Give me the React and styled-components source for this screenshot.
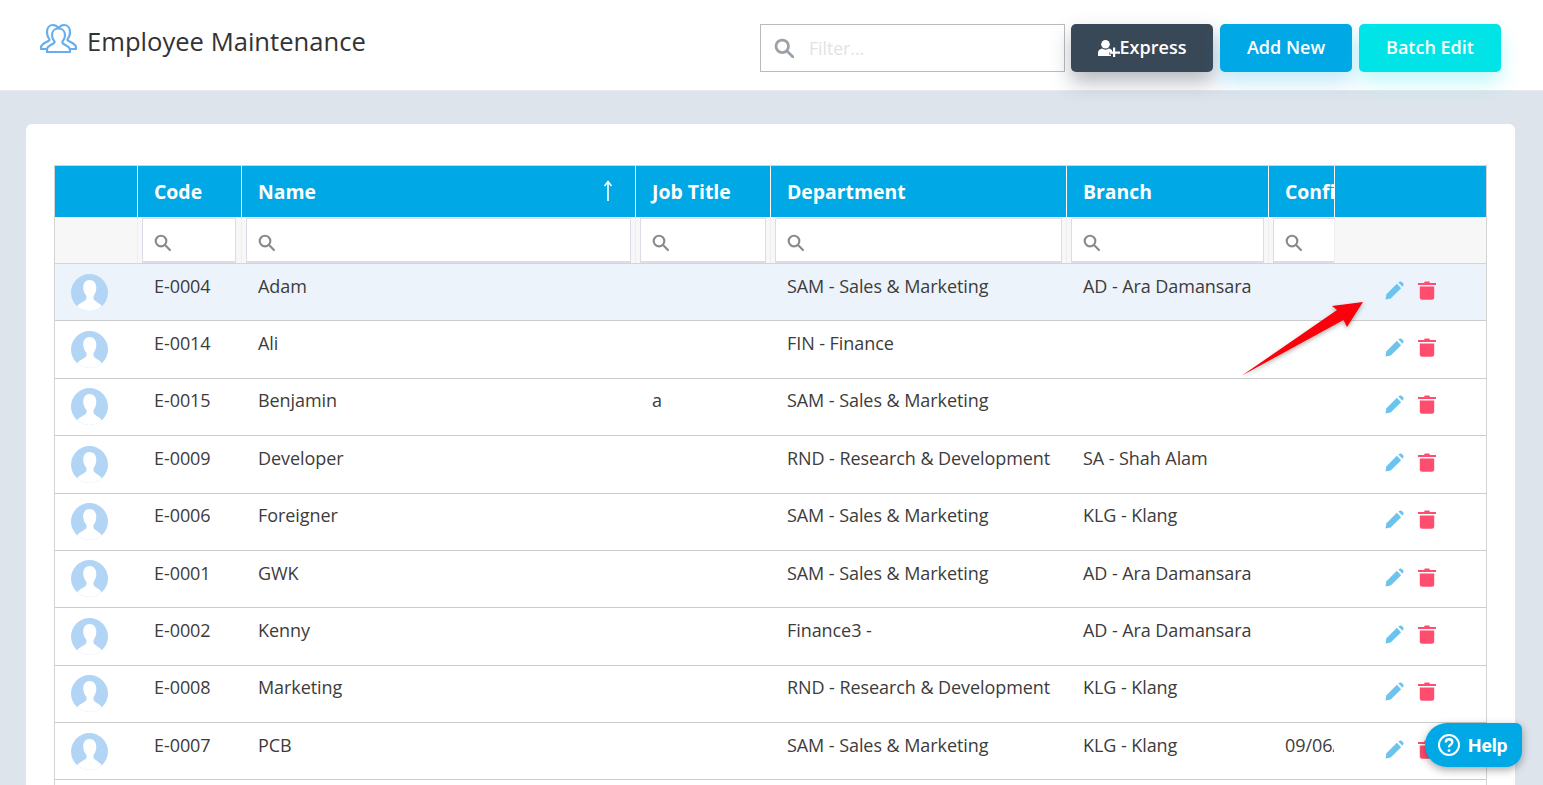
import React from "react";
import styled, { createGlobalStyle } from "styled-components";

const COLS = "82px 104px 394px 135px 296px 202px 66px 152px";

const Global = createGlobalStyle`
  html, body { margin: 0; padding: 0; height: 100%; overflow: hidden; background: #dde4ec; }
  body { font-family: "Open Sans", "Liberation Sans", sans-serif; color: #333; }
  * { box-sizing: border-box; }
`;

const Page = styled.div`
  position: relative;
  height: 785px;
  overflow: hidden;
  background: #dde4ec;
`;
const TopBar = styled.header`
  height: 91px;
  background: #fff;
  border-bottom: 1px solid #e6e9ed;
  display: flex;
  justify-content: space-between;
  padding: 0 42px 0 40px;
`;
const TitleWrap = styled.div`
  display: flex;
  align-items: flex-start;
  gap: 10px;
  padding-top: 23px;
`;
const Title = styled.h1`
  margin: 3px 0 0;
  font-size: 25.6px;
  line-height: 32px;
  font-weight: 500;
  color: #333;
`;
const Actions = styled.div`
  display: flex;
  gap: 7px;
  padding-top: 24px;
`;
const FilterBox = styled.div`
  width: 305px;
  height: 48px;
  margin-right: -1px;
  border: 1px solid #bbb;
  background: #fff;
  display: flex;
  align-items: center;
  gap: 15px;
  padding-left: 13px;
  color: #9aa1a8;
`;
const FilterText = styled.span`
  font-size: 17.6px;
  color: #e2e2e2;
`;
const Button = styled.button`
  width: ${p => p.$w}px;
  height: 48px;
  border: 0;
  border-radius: 5px;
  background: ${p => p.$bg};
  box-shadow: 0 10px 20px ${p => p.$shadow};
  color: #fff;
  font-family: inherit;
  font-size: 18px;
  font-weight: 600;
  display: flex;
  align-items: center;
  justify-content: center;
  padding: 0 0 2px;
`;
const Card = styled.main`
  margin: 33px 28px 0 26px;
  height: 800px;
  background: #fff;
  border-radius: 6px;
  padding: 41px 28px 0 28px;
`;
const TableWrap = styled.div`
  border: 1px solid #d4d4d4;
  border-bottom: 0;
`;
const HeadRow = styled.div`
  display: grid;
  grid-template-columns: ${COLS};
  height: 51px;
  background: #00a8e6;
`;
const HeadCell = styled.div`
  position: relative;
  display: flex;
  align-items: center;
  justify-content: space-between;
  padding: 0 22px 0 16px;
  overflow: hidden;
  white-space: nowrap;
  color: #fff;
  font-size: 19.4px;
  font-weight: 700;
  border-left: ${p => (p.$first ? "0" : "1px solid #fff")};
`;
const SortMark = styled.span`
  display: flex;
  margin: -2px 0 0 0;
`;
const FilterRow = styled.div`
  display: grid;
  grid-template-columns: ${COLS};
  height: 47.1px;
  background: #f7f7f7;
  border-bottom: 1px solid #d4d4de;
`;
const FilterCell = styled.div`
  padding: 1px ${p => (p.$tight ? 5 : 4)}px 0 4px;
  border-left: ${p => (p.$first ? "0" : "1px solid #eee")};
  overflow: hidden;
`;
const FilterInput = styled.div`
  height: 45px;
  background: #fff;
  border: 1px solid #dcdce6;
  border-bottom-width: 2px;
  ${p => (p.$cut ? "border-right: 0; margin-right: -5px;" : "")}
  display: flex;
  align-items: center;
  padding: 4px 0 0 11px;
  color: #8a8a8a;
`;
const Row = styled.div`
  display: grid;
  grid-template-columns: ${COLS};
  height: 57.36px;
  background: ${p => (p.$active ? "#ecf3fb" : "#fff")};
  border-bottom: 1px solid #ccc;
`;
const AvatarCell = styled.div`
  padding: 9.55px 0 0 16px;
`;
const Cell = styled.div`
  padding: 9.65px 0 0 17px;
  font-size: 18px;
  line-height: 24px;
  letter-spacing: -0.07px;
  color: #3c3c3c;
  overflow: hidden;
  white-space: nowrap;
`;
const ActionCell = styled.div`
  display: flex;
  align-items: flex-start;
  gap: 14px;
  padding: 16.65px 0 0 51px;
`;
const TrashWrap = styled.span`
  display: flex;
  margin-top: -1px;
`;
const ArrowLayer = styled.svg`
  position: absolute;
  left: 1235px;
  top: 296px;
  pointer-events: none;
`;
const Help = styled.div`
  position: absolute;
  left: 1425px;
  top: 723px;
  width: 97px;
  height: 44px;
  background: #00a8e6;
  border-radius: 22px 6px 16px 22px;
  box-shadow: 0 3px 8px rgba(0, 0, 0, 0.35);
  color: #fff;
  font-family: "Roboto", "Liberation Sans", sans-serif;
  font-size: 19px;
  font-weight: 700;
  display: flex;
  align-items: center;
  gap: 7px;
  padding-left: 12px;
`;

const SearchIcon = ({ s = 17, w = 2 }) => (
  <svg width={s} height={s} viewBox="0 0 16 16" fill="none" stroke="currentColor" strokeWidth={w} strokeLinecap="round">
    <circle cx="6.6" cy="6.6" r="5" />
    <path d="M10.4 10.4 15 15" />
  </svg>
);
const TeamIcon = () => (
  <svg width="37" height="30" viewBox="0 0 37 30" fill="none" stroke="#68aeee" strokeWidth="2.2" strokeLinejoin="round" style={{ marginTop: 0 }}>
    <path d="M9.500 16C7.500 14 7 11.500 7 9c0-4 2.500-7 6-7 2.500 0 4.500 1.500 5.500 3.500C19.500 3.500 21.500 2 24 2c3.500 0 6 3 6 7 0 2.500-.5 5-2.500 7" />
    <path d="M9.500 16v1c-1 2-8.500 3-8.500 7.500V26h7M27.500 16v1c1 2 8.500 3 8.500 7.500V26h-7" />
    <path d="M18.500 5.500c4 0 6.500 3 6.500 6.500 0 3-1 5-2.500 6.500v1.500c1 2 7.500 3 7.500 7V29H7v-2.500c0-4 6.500-5 7.500-7V18.500C13 17 12 15 12 12c0-3.500 2.500-6.500 6.500-6.500Z" fill="#fff" />
  </svg>
);
const UserPlus = () => (
  <svg width="22" height="17" viewBox="0 0 22 17" fill="#fff" style={{ marginTop: 2 }}>
    <circle cx="7.500" cy="4.300" r="4.300" />
    <path d="M0 16v-3.500c0-2 1.500-3.300 4-4 2 1.500 5 1.500 7 0 1.500.4 2.500 1 3 2v1.500h-3v2.500h2V16Z" />
    <path d="M15 7.500h2.200v4H22v2.200h-4.800V17H15v-3.300h-3.500v-2.200H15Z" />
  </svg>
);
const Avatar = () => (
  <svg width="37" height="37" viewBox="0 0 37 37">
    <defs>
      <clipPath id="av"><circle cx="18.500" cy="18.500" r="18.500" /></clipPath>
    </defs>
    <g clipPath="url(#av)">
      <rect width="37" height="37" fill="#b2d5f6" />
      <path d="M18.500 6c4.200 0 6.800 3 6.800 7.500 0 3.500-1 6.500-2.800 8.500v2.500c0 2.300 6 4 9 8.500l1.500 4.500H4l1.500-4.500c3-4.500 10-6.200 10-8.500V22c-1.800-2-3.300-5-3.300-8.500 0-4.500 2.500-7.500 6.300-7.500Z" fill="#fff" />
    </g>
  </svg>
);
const Pencil = () => (
  <svg width="19" height="19" viewBox="0 0 20 20" fill="#6bc4ee">
    <path d="M0.500 19.500 1.500 14 12.500 3 17 7.500 6 18.500Z" />
    <path d="M14 1.500 16 0.500Q16.800 .2 17.500 .8L19.300 2.600Q19.900 3.300 19.500 4L18.400 6 Z" />
  </svg>
);
const Trash = () => (
  <svg width="18" height="20" viewBox="0 0 18 20" fill="#ff4d70">
    <path d="M0 3h6l.8-1.500h4.400L12 3h6v2H0Z" />
    <path d="M1.800 6.500h14.400v11q0 2.300-2.300 2.300H4.100q-2.300 0-2.300-2.300Z" />
  </svg>
);
const HelpGlyph = () => (
  <svg width="24" height="24" viewBox="0 0 24 24" fill="none" stroke="#fff" strokeWidth="2">
    <circle cx="12" cy="12" r="10" />
    <path d="M8.800 9.500c0-2 1.400-3.200 3.300-3.200s3.200 1.200 3.200 2.900c0 2.400-3.300 2.500-3.300 5" strokeWidth="2.400" />
    <circle cx="12" cy="17.600" r="1.400" fill="#fff" stroke="none" />
  </svg>
);

const COLUMNS = ["", "Code", "Name", "Job Title", "Department", "Branch", "Confirmation", ""];
const AD = "AD - Ara Damansara";
const KLG = "KLG - Klang";
const SAM = "SAM - Sales & Marketing";
const RND = "RND - Research & Development";
const ROWS = [
  ["E-0004", "Adam", "", SAM, AD, ""],
  ["E-0014", "Ali", "", "FIN - Finance", "", ""],
  ["E-0015", "Benjamin", "a", SAM, "", ""],
  ["E-0009", "Developer", "", RND, "SA - Shah Alam", ""],
  ["E-0006", "Foreigner", "", SAM, KLG, ""],
  ["E-0001", "GWK", "", SAM, AD, ""],
  ["E-0002", "Kenny", "", "Finance3 -", AD, ""],
  ["E-0008", "Marketing", "", RND, KLG, ""],
  ["E-0007", "PCB", "", SAM, KLG, "09/06/2020"],
  ["", "", "", "", "", ""],
];

export default function App() {
  return (
    <Page>
      <Global />
      <TopBar>
        <TitleWrap>
          <TeamIcon />
          <Title>Employee Maintenance</Title>
        </TitleWrap>
        <Actions>
          <FilterBox>
            <SearchIcon s={20} w={2.200} />
            <FilterText>Filter...</FilterText>
          </FilterBox>
          <Button $w={142} $bg="#394856" $shadow="rgba(57,72,86,0.38)">
            <UserPlus />Express
          </Button>
          <Button $w={132} $bg="#00a8e6" $shadow="rgba(0,168,230,0.25)">Add New</Button>
          <Button $w={142} $bg="#00e4e8" $shadow="rgba(0,228,232,0.25)">Batch Edit</Button>
        </Actions>
      </TopBar>
      <Card>
        <TableWrap>
          <HeadRow>
            {COLUMNS.map((c, i) => (
              <HeadCell key={i} $first={i === 0}>
                {c}
                {c === "Name" && (
                  <SortMark>
                    <svg width="10" height="22" viewBox="0 0 10 22" fill="none" stroke="#fff" strokeWidth="1.600">
                      <path d="M5 21V2M1.500 6 5 1.500 8.500 6" />
                    </svg>
                  </SortMark>
                )}
              </HeadCell>
            ))}
          </HeadRow>
          <FilterRow>
            {COLUMNS.map((c, i) => (
              <FilterCell key={i} $first={i === 0} $tight={i === 1}>
                {c && (
                  <FilterInput $cut={c === "Confirmation"}>
                    <SearchIcon />
                  </FilterInput>
                )}
              </FilterCell>
            ))}
          </FilterRow>
          {ROWS.map((r, i) => (
            <Row key={i} $active={i === 0}>
              <AvatarCell>{r[0] && <Avatar />}</AvatarCell>
              <Cell>{r[0]}</Cell>
              <Cell>{r[1]}</Cell>
              <Cell>{r[2]}</Cell>
              <Cell>{r[3]}</Cell>
              <Cell>{r[4]}</Cell>
              <Cell>{r[5]}</Cell>
              <ActionCell>
                {r[0] && (
                  <>
                    <Pencil />
                    <TrashWrap><Trash /></TrashWrap>
                  </>
                )}
              </ActionCell>
            </Row>
          ))}
        </TableWrap>
      </Card>
      <ArrowLayer width="140" height="90" viewBox="0 0 140 90">
        <defs>
          <filter id="as" x="-20%" y="-20%" width="140%" height="140%">
            <feDropShadow dx="0" dy="2" stdDeviation="2" floodColor="#000" floodOpacity="0.3" />
          </filter>
        </defs>
        <path d="M7 79.500 102 14 97 10 128 6 112 31 108.500 24Z" fill="#fb0007" filter="url(#as)" />
      </ArrowLayer>
      <Help>
        <HelpGlyph />
        Help
      </Help>
    </Page>
  );
}
